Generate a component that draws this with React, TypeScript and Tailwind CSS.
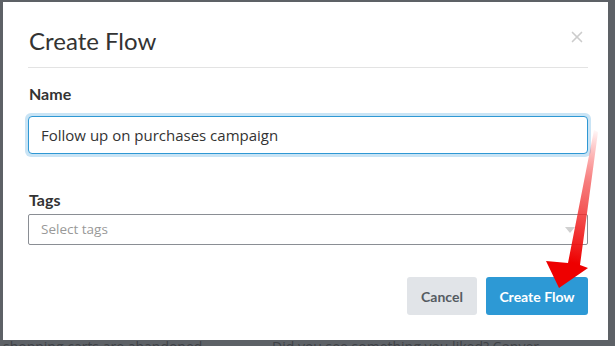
import { X } from 'lucide-react';

function Arrow() {
    return (
        <svg className="pointer-events-none absolute left-0 top-0" width="615" height="346" viewBox="0 0 615 346">
            <defs>
                <linearGradient id="arrowFade" x1="597" y1="128" x2="568" y2="262" gradientUnits="userSpaceOnUse">
                    <stop offset="0" stopColor="#ff1a1a" stopOpacity="0" />
                    <stop offset="0.4" stopColor="#f24545" stopOpacity="0.7" />
                    <stop offset="1" stopColor="#ee0000" stopOpacity="1" />
                </linearGradient>
            </defs>
            <path d="M594 130 L598 132 L580 265 L588 268 L559 288 L546 261 L568 263 Z" fill="url(#arrowFade)" />
        </svg>
    );
}

export default function App() {
    return (
        <div className="relative h-[346px] w-[615px] overflow-hidden bg-[#5d6166] pl-[3px] pt-[2px]" style={{ fontFamily: 'Lato, "Open Sans", sans-serif' }}>
            <div className="flex h-[338px] w-[605px] flex-col bg-white pl-[25px] pr-[20px]">
                <div className="flex items-center justify-between border-b border-[#e3e3e3] pb-[13px] pl-[1px] pt-[26px]">
                    <h2 className="text-[24px] leading-[26px] text-[#333333]">Create Flow</h2>
                    <X className="mr-[2px] mt-[-8px] h-[18px] w-[18px] text-[#cccccc]" strokeWidth={2.2} />
                </div>
                <label className="mt-[17px] pl-[1px] text-[16px] font-bold leading-[18px] text-[#333333]">Name</label>
                <div className="-mx-[3px] mt-[10px] rounded-[6px] bg-[#c9e4f5] p-[3px]">
                    <input
                        readOnly
                        value="Follow up on purchases campaign"
                        className="block h-[38px] w-full rounded-[4px] border border-[#2f98d4] bg-white pl-[12px] text-[15px] text-[#333333] outline-none"
                        style={{ fontFamily: '"Open Sans", sans-serif' }}
                    />
                </div>
                <label className="mt-[34px] pl-[1px] text-[16px] font-bold leading-[18px] text-[#333333]">Tags</label>
                <div className="mt-[5px] flex h-[31px] items-center justify-between rounded-[2px] border border-[#8a8e94] pl-[12px] pr-[12px] text-[13.5px] text-[#999999]" style={{ fontFamily: '"Open Sans", sans-serif' }}>
                    <span>Select tags</span>
                    <span className="h-0 w-0 border-x-[5px] border-t-[6px] border-x-transparent border-t-[#d0d0d0]" />
                </div>
                <div className="mt-[32px] flex justify-end gap-[9px]">
                    <button className="h-[38px] w-[70px] rounded-[3px] bg-[#e1e4e8] text-[14px] font-bold text-[#555b62]">Cancel</button>
                    <button className="h-[38px] w-[102px] rounded-[3px] bg-[#2d99d5] text-[14px] font-bold text-white">Create Flow</button>
                </div>
            </div>
            <div className="flex text-[14px] leading-[14px] text-[#3f4246]" style={{ fontFamily: '"Open Sans", sans-serif' }}>
                <span className="w-[269px] shrink-0">shopping carts are abandoned.</span>
                <span>Did you see something you liked? Conver</span>
            </div>
            <Arrow />
        </div>
    );
}
